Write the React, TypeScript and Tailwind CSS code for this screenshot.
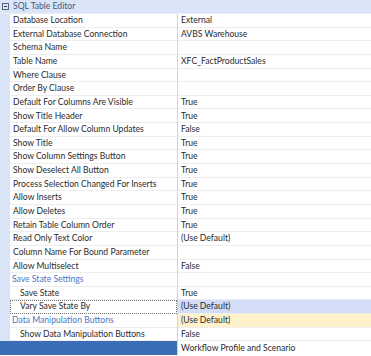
import React from 'react'

type Row = {
  label: string
  value?: string
  kind?: 'item' | 'cat' | 'sub'
  selected?: boolean
  highlight?: boolean
}

const rows: Row[] = [
  { label: 'Database Location', value: 'External' },
  { label: 'External Database Connection', value: 'AVBS Warehouse' },
  { label: 'Schema Name' },
  { label: 'Table Name', value: 'XFC_FactProductSales' },
  { label: 'Where Clause' },
  { label: 'Order By Clause' },
  { label: 'Default For Columns Are Visible', value: 'True' },
  { label: 'Show Title Header', value: 'True' },
  { label: 'Default For Allow Column Updates', value: 'False' },
  { label: 'Show Title', value: 'True' },
  { label: 'Show Column Settings Button', value: 'True' },
  { label: 'Show Deselect All Button', value: 'True' },
  { label: 'Process Selection Changed For Inserts', value: 'True' },
  { label: 'Allow Inserts', value: 'True' },
  { label: 'Allow Deletes', value: 'True' },
  { label: 'Retain Table Column Order', value: 'True' },
  { label: 'Read Only Text Color', value: '(Use Default)' },
  { label: 'Column Name For Bound Parameter' },
  { label: 'Allow Multiselect', value: 'False' },
  { label: 'Save State Settings', kind: 'cat' },
  { label: 'Save State', value: 'True', kind: 'sub' },
  { label: 'Vary Save State By', value: '(Use Default)', kind: 'sub', selected: true },
  { label: 'Data Manipulation Buttons', value: '(Use Default)', kind: 'cat', highlight: true },
  { label: 'Show Data Manipulation Buttons', value: 'False', kind: 'sub' },
]

function PropRow({ row }: { row: Row }) {
  const kind = row.kind || 'item'
  return (
    <div className="flex h-[13.65px]">
      <div className="w-[10px] shrink-0 bg-[#d9e4f6]" />
      <div
        className={`w-[167px] shrink-0 flex items-center border-b border-[#eeeeee] whitespace-nowrap overflow-hidden ${
          row.selected ? 'outline outline-1 outline-dotted outline-[#777] -outline-offset-1' : ''
        } ${kind === 'cat' ? 'pl-[2px] text-[#4b76c6]' : kind === 'sub' ? 'pl-[10px] text-[#2b2b2b]' : 'pl-[3px] text-[#2b2b2b]'}`}
      >
        {row.label}
      </div>
      <div className="w-px shrink-0 bg-[#c9d4e8]" />
      <div
        className={`flex-1 flex items-center pl-[3px] border-b border-[#eeeeee] text-[#2b2b2b] whitespace-nowrap ${
          row.selected ? 'bg-[#d3ddf7]' : row.highlight ? 'bg-[#fdf2cc]' : 'bg-white'
        }`}
      >
        {row.value}
      </div>
    </div>
  )
}

export default function App() {
  return (
    <div className="w-[371px] h-[356px] overflow-hidden bg-white text-[8.6px] leading-none font-['Lato',sans-serif]">
      {/* Category header */}
      <div className="flex items-center h-[14px] bg-[#dbe5f8] border-b border-[#e8edf6]">
        <div className="w-[10px] flex justify-center items-center">
          <div className="w-[7px] h-[7px] border border-[#5a6478] flex items-center justify-center">
            <div className="w-[3px] h-px bg-[#3a4458]" />
          </div>
        </div>
        <span className="pl-[3px] text-[#3f577f]">SQL Table Editor</span>
      </div>

      {rows.map((r) => (
        <PropRow key={r.label} row={r} />
      ))}

      {/* Bottom row */}
      <div className="flex h-[14px]">
        <div className="w-[177px] shrink-0 bg-[#3a6db5]" />
        <div className="w-px shrink-0 bg-[#c9d4e8]" />
        <div className="flex-1 flex items-center pl-[3px] text-[#2b2b2b] whitespace-nowrap">Workflow Profile and Scenario</div>
      </div>
    </div>
  )
}
